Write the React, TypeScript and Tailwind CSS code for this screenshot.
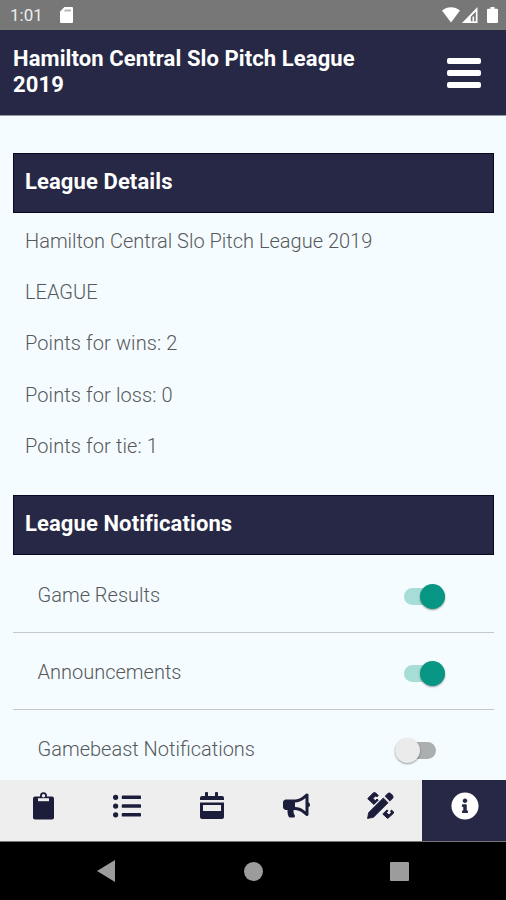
import React from 'react';
import clsx from 'clsx';
import { FaBullhorn, FaInfoCircle, FaListUl } from 'react-icons/fa';

const leagueInfo = ['Hamilton Central Slo Pitch League 2019', 'LEAGUE'];

const points = ['Points for wins: 2', 'Points for loss: 0', 'Points for tie: 1'];

const notifications = [
  { label: 'Game Results', enabled: true },
  { label: 'Announcements', enabled: true },
  { label: 'Gamebeast Notifications', enabled: false },
];

const StatusBar: React.FC = () => (
  <div className="flex h-[30px] shrink-0 items-center bg-[#777777] pl-[10px] pr-[8px] text-white">
    <span className="w-[50px] pt-px text-[17px] leading-[29px] text-[#ededed]">1:01</span>
    <svg className="h-4 w-[13px]" viewBox="0 0 13 16" fill="currentColor">
      <path d="M4.5 0H12a1 1 0 0 1 1 1v14a1 1 0 0 1-1 1H1a1 1 0 0 1-1-1V4.5z" />
      <path d="M5 2.5h6v2H4z" fill="#b5b5b5" />
    </svg>
    <div className="ml-auto flex items-center gap-[2px]">
      <svg className="h-4 w-[18px]" viewBox="0 0 18 16" fill="currentColor">
        <path d="M0 3.6C5-1 13-1 18 3.6L9 15.5z" />
      </svg>
      <svg className="h-4 w-[16px]" viewBox="0 0 16 16" fill="currentColor">
        <path fillRule="evenodd" d="M15.5 0v16H0zM13.8 4.5l-5 5.3v4.4h5z" />
        <path d="M10.5 9.5h1.6v4.7h-1.6z" />
      </svg>
      <svg className="ml-[7px] h-4 w-[11px]" viewBox="0 0 11 16" fill="currentColor">
        <path d="M3.5 0h4v1.7H10a1 1 0 0 1 1 1V15a1 1 0 0 1-1 1H1a1 1 0 0 1-1-1V2.7a1 1 0 0 1 1-1h2.5z" />
      </svg>
    </div>
  </div>
);

const SectionTitle: React.FC<{ children: React.ReactNode }> = ({ children }) => (
  <h2 className="h-[60px] border border-[#080824] bg-[#262845] pl-[11px] pt-[14.5px] text-[22px] font-bold leading-[26px] tracking-[0.1px] text-white">
    {children}
  </h2>
);

const Toggle: React.FC<{ enabled: boolean }> = ({ enabled }) => (
  <div
    className={clsx(
      'flex h-[17px] w-[41px] items-center rounded-full',
      enabled ? 'mr-[49px] justify-end bg-[#a6ddd6]' : 'mr-[58px] bg-[#acafb0]'
    )}
  >
    <div
      className={clsx(
        'size-[25px] shrink-0 rounded-full shadow-[0_1px_2px_rgba(0,0,0,0.4)]',
        enabled ? 'bg-[#079584]' : 'bg-[#ebebeb]'
      )}
    />
  </div>
);

const ClipboardIcon: React.FC = () => (
  <svg className="h-[28px] w-[21px]" viewBox="0 0 21 28" fill="currentColor">
    <rect y="4.5" width="21" height="23" rx="2" />
    <circle cx="10.5" cy="3.8" r="2.6" fill="#eeeeee" stroke="currentColor" strokeWidth="1.8" />
    <path d="M5 6.2h11v3H5z" fill="#eeeeee" />
  </svg>
);

const CalendarIcon: React.FC = () => (
  <svg className="h-[27px] w-6" viewBox="0 0 24 27" fill="currentColor">
    <path d="M0 8V6a2 2 0 0 1 2-2h3V1a1 1 0 0 1 1-1h1a1 1 0 0 1 1 1v3h7V1a1 1 0 0 1 1-1h1a1 1 0 0 1 1 1v3h4a2 2 0 0 1 2 2v2z" />
    <path fillRule="evenodd" d="M0 10.5h24V25a2 2 0 0 1-2 2H2a2 2 0 0 1-2-2zM3 13v6h18v-6z" />
  </svg>
);

// pencil laid over a ruler, with a gap on both sides of the pencil
const DesignIcon: React.FC = () => (
  <svg className="size-[27px]" viewBox="0 0 27 27" fill="currentColor" stroke="currentColor" strokeLinejoin="round">
    <path strokeWidth="0.8" d="M0.5 26.5l1.2-6L16.3 6l4.8 4.8L6.5 25.3z" />
    <path strokeWidth="1.2" d="M18.5 4.2l2.3-2.3q1.4-1.4 2.8 0l1.6 1.6q1.4 1.4 0 2.8l-2.3 2.3z" />
    <path strokeWidth="1" d="M0.7 6.6l5.8-5.8h2l2.8 2.8-1 1-2-0.5-2.3 2.3 2.3 2.3 1.7-1.7 1.2 1.2-4.3 4.3z" />
    <path strokeWidth="1" d="M15.8 22.1l4.2-4.2 1 1-1.6 1.6 2.5 2.5 2.3-2.3-0.6-1.8 0.9-0.9 2 2v1.2L20.7 26.5z" />
  </svg>
);

const tabs = [
  { name: 'clipboard', icon: <ClipboardIcon /> },
  { name: 'list', icon: <FaListUl className="size-[28px]" /> },
  { name: 'calendar', icon: <CalendarIcon /> },
  { name: 'announce', icon: <FaBullhorn className="size-[27px]" /> },
  { name: 'tools', icon: <DesignIcon /> },
  { name: 'info', icon: <FaInfoCircle className="size-[28px]" />, active: true },
];

const App: React.FC = () => {
  return (
    <div className="flex h-[900px] w-[506px] flex-col overflow-hidden bg-[#f5fcff] font-['Roboto',sans-serif]">
      <StatusBar />

      <header className="flex h-[86px] shrink-0 justify-between border-b border-[#9698a8] bg-[#262845] pl-[13px] pr-[25px]">
        <h1 className="w-[380px] pt-[16px] text-[22px] font-bold leading-[26px] tracking-[0.1px] text-white">
          Hamilton Central Slo Pitch League 2019
        </h1>
        <div className="mt-[28px] flex h-[30px] w-[34px] flex-col justify-between">
          <div className="h-[6px] rounded-[2px] bg-white" />
          <div className="h-[6px] rounded-[2px] bg-white" />
          <div className="h-[6px] rounded-[2px] bg-white" />
        </div>
      </header>

      <main className="min-h-0 flex-1 overflow-hidden pl-[13px] pr-[12px] pt-[37px]">
        <SectionTitle>League Details</SectionTitle>
        <div className="mb-[24.5px] pl-[12px] pt-[1.5px] text-[20px] font-light text-[#55595b]">
          {leagueInfo.map((line) => (
            <p key={line} className="h-[51.3px] pt-[13px] leading-[26px]">
              {line}
            </p>
          ))}
          {points.map((line) => (
            <p key={line} className="h-[51.3px] pt-[13.3px] leading-[26px] tracking-[0.1px]">
              {line}
            </p>
          ))}
        </div>

        <SectionTitle>League Notifications</SectionTitle>
        <div className="pt-[0.7px]">
          {notifications.map((item) => (
            <div
              key={item.label}
              className="flex h-[77px] items-center justify-between border-b border-[#c3c9cc] pl-[24.5px] pt-[5px]"
            >
              <span className="pb-[3px] text-[20px] font-light leading-[26px] text-[#55595b]">{item.label}</span>
              <Toggle enabled={item.enabled} />
            </div>
          ))}
        </div>
      </main>

      <nav className="grid h-[62px] shrink-0 grid-cols-6 border-b border-[#777777] bg-[#eeeeee]">
        {tabs.map((tab) => (
          <div
            key={tab.name}
            className={clsx(
              'flex justify-center pl-[2px] pt-[12px]',
              tab.active ? 'bg-[#262845] text-white' : 'text-[#1c1c3b]'
            )}
          >
            {tab.icon}
          </div>
        ))}
      </nav>

      <div className="flex h-[58px] shrink-0 items-center justify-between bg-black pl-[97px] pr-[97px]">
        <svg className="h-[22px] w-[18px]" viewBox="0 0 18 22" fill="#9c9c9c">
          <path d="M18 0v22L0 11z" />
        </svg>
        <div className="ml-[2px] size-[19px] rounded-full bg-[#9c9c9c]" />
        <div className="size-[19px] rounded-[1px] bg-[#9c9c9c]" />
      </div>
    </div>
  );
};

export default App;
